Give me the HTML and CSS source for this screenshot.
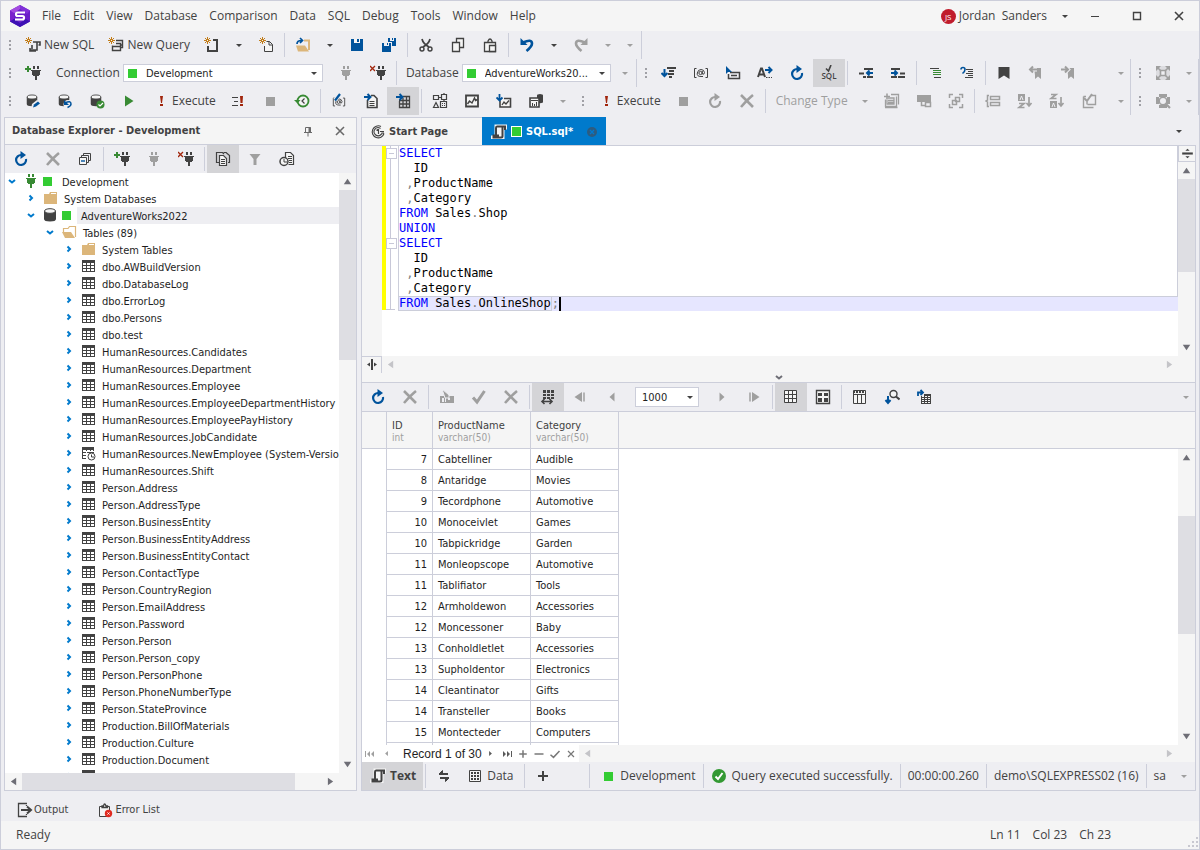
FILE: index.html
```
<!DOCTYPE html>
<html lang="en">
<head>
    <meta charset="UTF-8">
    <meta name="viewport" content="width=device-width, initial-scale=1.0">
    <title>SQL.sql - Database Explorer</title>
    <link rel="stylesheet" href="styles.css">
</head>
<body>
    <svg class="sprite" aria-hidden="true">
        <symbol id="i-caret" viewBox="0 0 16 16"><path d="M5 7h6l-3 3z" fill="currentColor"/></symbol>
        <symbol id="i-up" viewBox="0 0 16 16"><path d="M4.500 10.500h7L8 5.500z" fill="currentColor"/></symbol>
        <symbol id="i-down" viewBox="0 0 16 16"><path d="M4.500 5.500h7L8 10.500z" fill="currentColor"/></symbol>
        <symbol id="i-left" viewBox="0 0 16 16"><path d="M10.500 4.500v7L5.500 8z" fill="currentColor"/></symbol>
        <symbol id="i-right" viewBox="0 0 16 16"><path d="M5.500 4.500v7L10.500 8z" fill="currentColor"/></symbol>
        <symbol id="i-spark" viewBox="0 0 8 8"><path d="M3.500 0v7M0 3.500h7M1 1l5 5M6 1L1 6" stroke="#c27d1a" stroke-width="1" fill="none"/><path d="M3 3h1v1H3z" fill="#f5f5f5"/></symbol>
        <symbol id="i-script" viewBox="0 0 16 16"><path d="M4 2h9v3h-2v8H2v-2h2z" fill="#f5f5f5"/><path d="M14 5.500V2.500H5.500V12M11.500 2.500v10.500H2V11.500" fill="none" stroke="#f5f5f5" stroke-width="4"/><path d="M14 6V2.500H6Q5 2.500 5 4v7.500M11.500 2.500V12q0 1.500-1.500 1.500H2.500V11.500H8" fill="none" stroke="#424242" stroke-width="2"/></symbol>
        <symbol id="i-new-sql" viewBox="0 0 16 16"><path d="M8 5h7v3h-1.500M12 5v8H5.500M5 11v3h6M7 8v4" fill="none" stroke="#424242" stroke-width="1.600"/><use href="#i-spark" x="0" y="0" width="8" height="8"/></symbol>
        <symbol id="i-new-query" viewBox="0 0 16 16"><path d="M8 3.500h6.500v7H13M8 6.500h4.500v7h-8v-5M5 9.500h7M12 8h2" fill="none" stroke="#424242" stroke-width="1.400"/><use href="#i-spark" width="8" height="8"/></symbol>
        <symbol id="i-new-obj" viewBox="0 0 16 16"><path d="M9 3h4v11H4V9" fill="none" stroke="#424242" stroke-width="2"/><use href="#i-spark" width="8" height="8"/></symbol>
        <symbol id="i-new-doc" viewBox="0 0 16 16"><path d="M8.500 4.500h3l3 3v7h-8V9M11 4.500V8h3.500" fill="#f5f5f5" stroke="#424242"/><use href="#i-spark" x="1" width="8" height="8"/></symbol>
        <symbol id="i-open" viewBox="0 0 16 16"><path d="M9 3.500h5V13" fill="none" stroke="#dcb67a" stroke-width="2"/><path d="M1 8.500h9l4 6H3z" fill="#dcb67a"/><path d="M2 7q0-3.500 4.500-3.500M5 1l2.500 2.500L5 6" fill="none" stroke="#00539c" stroke-width="1.700"/></symbol>
        <symbol id="i-save" viewBox="0 0 16 16"><path d="M2 2h12v12H2z" fill="#00539c"/><path d="M5 2h6v4H5z" fill="#f5f5f5"/><path d="M8 2h2v3H8z" fill="#00539c"/></symbol>
        <symbol id="i-save-all" viewBox="0 0 16 16"><path d="M7 1h8v8H7z" fill="#00539c"/><path d="M9 1h4v3H9zM0 5h11v10H0z" fill="#eeeef2"/><path d="M11 1h1v2h-1zM1 6h9v9H1z" fill="#00539c"/><path d="M3 6h5v3H3z" fill="#eeeef2"/><path d="M6 6h1v2H6z" fill="#00539c"/></symbol>
        <symbol id="i-cut" viewBox="0 0 16 16"><path d="M4 2q1 4.500 7 8M12 2q-1 4.500-7 8" fill="none" stroke="#424242" stroke-width="1.700"/><circle cx="4" cy="12" r="2" fill="none" stroke="#424242" stroke-width="1.400"/><circle cx="12" cy="12" r="2" fill="none" stroke="#424242" stroke-width="1.400"/></symbol>
        <symbol id="i-copy" viewBox="0 0 16 16"><path d="M6.500 1.500h7v9h-7z" fill="#f5f5f5" stroke="#424242" stroke-width="1.300"/><path d="M2.500 5.500h7v9h-7z" fill="#f5f5f5" stroke="#424242" stroke-width="1.300"/></symbol>
        <symbol id="i-paste" viewBox="0 0 16 16"><path d="M2.500 5.500h11v9h-11zM6 5.500V4q2-4 4 0v1.500" fill="#f5f5f5" stroke="#424242" stroke-width="1.300"/><path d="M7.500 8.500h6v6h-6z" fill="#f5f5f5" stroke="#424242" stroke-width="1.300"/></symbol>
        <symbol id="i-undo" viewBox="0 0 16 16"><path d="M4 5.500q9-4 9 1 0 3-5.500 7.500" fill="none" stroke="currentColor" stroke-width="2.600"/><path d="M1.500 1v7h7L6.500 6 4 3.500z" fill="currentColor"/></symbol>
        <symbol id="i-redo" viewBox="0 0 16 16"><path d="M12 5.500q-9-4-9 1 0 3 5.500 7.500" fill="none" stroke="currentColor" stroke-width="2.600"/><path d="M14.500 1v7h-7l2-2L12 3.500z" fill="currentColor"/></symbol>
        <symbol id="i-plug" viewBox="0 0 16 16"><path d="M5 1h2v3H5zM9 1h2v3H9zM3 5h10v1h-1v4h-1v1H9v4H7v-4H5v-1H4V6H3z" fill="currentColor"/></symbol>
        <symbol id="i-plug-add" viewBox="0 0 16 16"><use href="#i-plug" x="3" width="16" height="16"/><path d="M0 4h6M3 1v6" stroke="#388a34" stroke-width="2"/></symbol>
        <symbol id="i-plug-x" viewBox="0 0 16 16"><use href="#i-plug" x="3" width="16" height="16"/><path d="M0 1l5 5M5 1L0 6" stroke="#a1260d" stroke-width="1.300"/></symbol>
        <symbol id="i-db" viewBox="0 0 16 16"><path d="M2 4v8q0 2.500 6 2.500t6-2.500V4z" fill="#424242"/><ellipse cx="8" cy="4" rx="5.500" ry="2.300" fill="#f5f5f5" stroke="#424242"/></symbol>
        <symbol id="i-db-edit" viewBox="0 0 16 16"><use href="#i-db" width="14" height="15"/><path d="M6 16l1-5 5-4 4 3-5 5z" fill="#eeeef2"/><path d="M8 14.500l1-3 4-3 2 2-4 3z" fill="#00539c"/></symbol>
        <symbol id="i-db-undo" viewBox="0 0 16 16"><use href="#i-db" width="14" height="15"/><circle cx="11" cy="11.500" r="4.500" fill="#eeeef2"/><path d="M8 10q6-3 6 1 0 2-3.500 3.500" fill="none" stroke="#00539c" stroke-width="1.500"/><path d="M7 7v5h5z" fill="#00539c"/></symbol>
        <symbol id="i-db-ok" viewBox="0 0 16 16"><use href="#i-db" width="14" height="15"/><circle cx="11.500" cy="11.500" r="4" fill="#388a34"/><path d="M9.500 11.500l1.500 1.500 3-3" fill="none" stroke="#fff" stroke-width="1.200"/></symbol>
        <symbol id="i-play" viewBox="0 0 16 16"><path d="M4 2.500v11L12.500 8z" fill="#388a34"/></symbol>
        <symbol id="i-bang" viewBox="0 0 16 16"><path d="M7 3h3l-1 7H8zM7 11h3v2H7z" fill="#a1260d"/></symbol>
        <symbol id="i-bang-list" viewBox="0 0 16 16"><path d="M2 4.500h6M4 8.500h4M2 12.500h6" stroke="#424242"/><path d="M10 3h3l-.5 7h-2zM10 11h3v2h-3z" fill="#a1260d"/></symbol>
        <symbol id="i-stop" viewBox="0 0 16 16"><path d="M4 4h9v9H4z" fill="#9f9f9f"/></symbol>
        <symbol id="i-history" viewBox="0 0 16 16"><circle cx="9" cy="8" r="5.500" fill="#f5f5f5" stroke="#388a34" stroke-width="1.800"/><path d="M10.500 5.500L8 8l2.500 2.500" fill="none" stroke="#424242" stroke-width="1.200"/><path d="M0 7h6.500L3.500 10.500z" fill="#388a34"/></symbol>
        <symbol id="i-at" viewBox="0 0 16 16"><path d="M3.500 3.500h-2v9h2M12.500 3.500h2v9h-2" fill="none" stroke="#424242"/><circle cx="7.500" cy="8" r="1.600" fill="none" stroke="#424242"/><path d="M9.300 6v3q2 1 2.200-1.500Q11 4.500 8 4.500T4.300 8 8 11.500h2" fill="none" stroke="#424242"/></symbol>
        <symbol id="i-at-edit" viewBox="0 0 16 16"><use href="#i-at" y="2" width="16" height="14"/><path d="M4 7L9 1" stroke="#eeeef2" stroke-width="4"/><path d="M4 7.500L9 1" stroke="#00539c" stroke-width="2.200"/></symbol>
        <symbol id="i-doc-go" viewBox="0 0 16 16"><path d="M8 2.500h3l3 3v9H4.500V7" fill="#f5f5f5" stroke="#424242" stroke-width="1.600"/><path d="M6.500 8.500h5M6.500 10.500h5M6.500 12.500h5" stroke="#424242"/><path d="M1 4h6M4.500 1l3 3-3 3" fill="none" stroke="#00539c" stroke-width="2"/></symbol>
        <symbol id="i-grid-go" viewBox="0 0 16 16"><path d="M8 3.500h6.500v11h-10V8M4 7.500h10M4 11h10M8 5v10M11.500 4v11" fill="none" stroke="#424242" stroke-width="1.300"/><path d="M1 4h6M4.500 1l3 3-3 3" fill="none" stroke="#00539c" stroke-width="2"/></symbol>
        <symbol id="i-diagram" viewBox="0 0 16 16"><path d="M1.500 2.500h5v4h-5zM7 4.500h3M1.500 14.500h5L4 9.500z" fill="none" stroke="#424242" stroke-width="1.200"/><path d="M9.500 1.500h5v5h-5zM8.500 8.500h6v6h-6zM12 2V0M12 7v2" fill="none" stroke="#424242" stroke-width="1.200"/><path d="M10 10.500h3M10 12.500h3" stroke="#424242" stroke-dasharray="1 1"/></symbol>
        <symbol id="i-chart" viewBox="0 0 16 16"><path d="M2 2.500h12v11H2z" fill="#f5f5f5" stroke="#424242" stroke-width="1.800"/><path d="M3.500 11l2-3L8 10l2.500-5 1 2.500 2-1" fill="none" stroke="#424242" stroke-width="1.400"/></symbol>
        <symbol id="i-chart-in" viewBox="0 0 16 16"><path d="M4 7.500V14h10.500V5.500H8" fill="#f5f5f5" stroke="#424242" stroke-width="1.600"/><path d="M6 12l2-3 2 2 3-3.500" fill="none" stroke="#424242" stroke-width="1.300"/><path d="M3.500 1v6M.5 4.500l3 3 3-3" fill="none" stroke="#00539c" stroke-width="1.800"/></symbol>
        <symbol id="i-chart-db" viewBox="0 0 16 16"><path d="M9 2.500v7q3 1.500 6 0v-7z" fill="#424242"/><ellipse cx="12" cy="2.500" rx="3" ry="1.500" fill="#424242"/><path d="M2 5h9v9H2z" fill="#f5f5f5" stroke="#424242" stroke-width="1.600"/><path d="M3 7.500h7M4.500 13v-3M6.500 13v-2M8.500 13V9" stroke="#424242"/></symbol>
        <symbol id="i-format" viewBox="0 0 16 16"><path d="M6 3h9M8 6h5M7 9h6M8 12h3" stroke="#424242" stroke-width="2"/><path d="M3.500 4v7M.5 8l3 3 3-3" fill="none" stroke="#00539c" stroke-width="2"/></symbol>
        <symbol id="i-select" viewBox="0 0 16 16"><path d="M5 7.500h9.500v6H3.500V9M6 10.500h6" fill="none" stroke="#424242" stroke-width="1.500"/><path d="M1 1v8l2-2h4z" fill="#00539c"/></symbol>
        <symbol id="i-rename" viewBox="0 0 16 16"><path d="M1 12L4 3.500h1L8 12M2.500 9.500h4" fill="none" stroke="#424242" stroke-width="2"/><path d="M9 12.500h1.500M11.500 12.500H13M14 12.500h1" stroke="#424242"/><path d="M8 5h6M11.500 2l3 3-3 3" fill="none" stroke="#00539c" stroke-width="2"/></symbol>
        <symbol id="i-refresh" viewBox="0 0 16 16"><path d="M13 8A5 5 0 1 1 8.500 4" fill="none" stroke="currentColor" stroke-width="2.200"/><path d="M7.500 0l5.500 4-5.500 4z" fill="currentColor"/></symbol>
        <symbol id="i-sql-check" viewBox="0 0 16 16"><path d="M5 3.500L7.500 6 10 0" fill="none" stroke="#424242" stroke-width="1.600"/><text x="8" y="14" text-anchor="middle" class="svg-text">SQL</text></symbol>
        <symbol id="i-outdent" viewBox="0 0 16 16"><path d="M6 4h9M1 8.500h5M9 12h6M5 12h3" stroke="#424242" stroke-width="2"/><path d="M9 8h6M11.500 5.500L9 8l2.500 2.500" fill="none" stroke="#00539c" stroke-width="2"/></symbol>
        <symbol id="i-indent" viewBox="0 0 16 16"><path d="M1 4h9M10 8.500h5M1 12h6M8 12h7" stroke="#424242" stroke-width="2"/><path d="M1 8h6M4.500 5.500L7 8l-2.500 2.500" fill="none" stroke="#00539c" stroke-width="2"/></symbol>
        <symbol id="i-comment" viewBox="0 0 16 16"><path d="M3 3.500h9M7 12.500h7" stroke="#424242"/><path d="M6 5.500h8M6 7.500h8M6 9.500h8" stroke="#388a34"/></symbol>
        <symbol id="i-uncomment" viewBox="0 0 16 16"><path d="M7 4.500h7M9 6.500h5M7 8.500h7M9 10.500h5M6 12.500h8" stroke="#424242"/><path d="M2 4.500q0-2 2-2t2 2-2.500 4" fill="none" stroke="#00539c" stroke-width="1.600"/></symbol>
        <symbol id="i-bookmark" viewBox="0 0 16 16"><path d="M2.500 2h11v12L8 10.500 2.500 14z" fill="currentColor"/></symbol>
        <symbol id="i-bm-prev" viewBox="0 0 16 16"><path d="M6 3h7v11l-3-2.500L7 14v-4z" fill="currentColor"/><path d="M9 4.500H2M5 1.500l-3 3 3 3" fill="none" stroke="#eeeef2" stroke-width="4"/><path d="M9 4.500H2M5 1.500l-3 3 3 3" fill="none" stroke="currentColor" stroke-width="2"/></symbol>
        <symbol id="i-bm-next" viewBox="0 0 16 16"><path d="M7 3h7v11l-3-2.500L8 14v-4z" fill="currentColor"/><path d="M1 4.500h7M5 1.500l3 3-3 3" fill="none" stroke="#eeeef2" stroke-width="4"/><path d="M1 4.500h7M5 1.500l3 3-3 3" fill="none" stroke="currentColor" stroke-width="2"/></symbol>
        <symbol id="i-fit" viewBox="0 0 16 16"><path d="M1 1h14v14H1z" fill="#dcdce0"/><path d="M5.500 5.500h5v5h-5z" fill="#eeeef2" stroke="currentColor" stroke-width="1.600"/><path d="M1 1h5L1 6zM15 1h-5l5 5zM1 15h5l-5-5zM15 15h-5l5-5z" fill="currentColor"/><path d="M3 3l3 3M13 3l-3 3M3 13l3-3M13 13l-3-3" stroke="currentColor" stroke-width="1.500"/></symbol>
        <symbol id="i-fit-zoom" viewBox="0 0 16 16"><path d="M4 2.500h8M2.500 4v7M13.500 4v7M4 13.500h8" stroke="currentColor" stroke-width="3"/><circle cx="8" cy="8" r="3.800" fill="#eeeef2" stroke="currentColor" stroke-width="1.600"/><path d="M10.500 10.500L15 15" stroke="currentColor" stroke-width="2.200"/></symbol>
        <symbol id="i-layers" viewBox="0 0 16 16"><path d="M7 1.500h7.500v10M12.500 3.500v10h-11v-7" fill="none" stroke="currentColor" stroke-width="1.300"/><path d="M1 14.500h12.500M4 5h6v6H3V7M4 7.500h6M4 9.500h6" fill="none" stroke="currentColor" stroke-width="1.300"/><path d="M0 3.500h6M3 .5v6" stroke="currentColor" stroke-width="1.600"/></symbol>
        <symbol id="i-container" viewBox="0 0 16 16"><path d="M1 2h14v7H1z" fill="currentColor"/><path d="M5.500 9v3.500H9M9.500 9.500h5v4h-5z" fill="#eeeef2" stroke="currentColor" stroke-width="1.500"/></symbol>
        <symbol id="i-focus" viewBox="0 0 16 16"><path d="M1.500 5V1.500H5M11 1.500h3.500V5M14.500 11v3.500H11M5 14.500H1.500V11M7.500 4.500h4v4h-4zM4.500 7.500h4v4h-4z" fill="none" stroke="currentColor" stroke-width="1.500"/></symbol>
        <symbol id="i-brace" viewBox="0 0 16 16"><path d="M4 2.500H2.500V7L1 8l1.500 1v4.500H4M5.500 3.500h9v3h-9zM5.500 9.500h9v3h-9z" fill="none" stroke="currentColor" stroke-width="1.500"/></symbol>
        <symbol id="i-az" viewBox="0 0 16 16"><path d="M1 1h7v7H1z" fill="currentColor"/><path d="M3 7l1.500-4L6 7" fill="none" stroke="#eeeef2"/><path d="M2 10.500h5l-5 4h5.500M12 4v9M9.500 10l2.500 3 2.500-3" fill="none" stroke="currentColor" stroke-width="1.700"/></symbol>
        <symbol id="i-za" viewBox="0 0 16 16"><path d="M1 8h7v7H1z" fill="currentColor"/><path d="M3 14l1.500-4L6 14" fill="none" stroke="#eeeef2"/><path d="M2 1.500h5l-5 4h5.500M12 4v9M9.500 10l2.500 3 2.500-3" fill="none" stroke="currentColor" stroke-width="1.700"/></symbol>
        <symbol id="i-task" viewBox="0 0 16 16"><path d="M10 2.500h4.500v9h-8M2.500 3.500v11h10M6 11.500V9M2.500 3.500H5" fill="none" stroke="currentColor" stroke-width="1.400"/><path d="M3 5l3 3 5-7" fill="none" stroke="currentColor" stroke-width="2"/></symbol>
        <symbol id="i-x" viewBox="0 0 16 16"><path d="M2 2l12 12M14 2q-5 4-12 12" fill="none" stroke="currentColor" stroke-width="2.600"/></symbol>
        <symbol id="i-close" viewBox="0 0 16 16"><path d="M4 4l8 8M12 4l-8 8" stroke="currentColor" stroke-width="1.600"/></symbol>
        <symbol id="i-min" viewBox="0 0 16 16"><path d="M4 8.500h8" stroke="currentColor"/></symbol>
        <symbol id="i-max" viewBox="0 0 16 16"><path d="M4.500 4.500h7v7h-7z" fill="none" stroke="currentColor" stroke-width="1.400"/></symbol>
        <symbol id="i-pin" viewBox="0 0 16 16"><path d="M5.500 9V4.500h5V9M4 9.500h8M8 10v3.500" fill="none" stroke="currentColor"/><path d="M8.500 4.500H11V9H8.500z" fill="currentColor"/></symbol>
        <symbol id="i-collapse" viewBox="0 0 16 16"><path d="M6.500 4V2.500h7v7H12M4.500 6V4.500h7v7H10" fill="none" stroke="#424242"/><path d="M2.500 6.500h7v7h-7z" fill="#f5f5f5" stroke="#424242"/><path d="M4 10h4" stroke="#00539c" stroke-width="1.400"/></symbol>
        <symbol id="i-docs" viewBox="0 0 16 16"><path d="M4 11.500H1.500v-10h6L9 3M11 1.500l3.500 3v7H13" fill="none" stroke="#424242" stroke-width="1.200"/><path d="M4.500 4.500h4l3 3v7h-7zM8.500 1.500h3" fill="#f5f5f5" stroke="#424242" stroke-width="1.200"/><path d="M6 8.500h4M6 10.500h4M6 12.500h4" stroke="#424242"/></symbol>
        <symbol id="i-filter" viewBox="0 0 16 16"><path d="M2.500 3h11L9.500 8v6h-3V8z" fill="currentColor"/></symbol>
        <symbol id="i-doc-clock" viewBox="0 0 16 16"><path d="M6.500 7V1.500h5l3 3v9h-5" fill="#f5f5f5" stroke="#424242" stroke-width="1.200"/><path d="M9 5.500h4M9 7.500h4M10 9.500h3M10 11.500h3" stroke="#424242"/><circle cx="5" cy="10.500" r="4" fill="#f5f5f5" stroke="#424242" stroke-width="1.500"/><path d="M5 8v3h3" fill="none" stroke="#424242"/></symbol>
        <symbol id="i-folder" viewBox="0 0 16 16"><path d="M2 4h5l1-2h7v12H2z" fill="#dcb67a"/><path d="M9 3.500h5" stroke="#fff"/></symbol>
        <symbol id="i-folder-open" viewBox="0 0 16 16"><path d="M2.500 8V4.500H7l1.500-2h6v10.500" fill="none" stroke="#dcb67a" stroke-width="1.200"/><path d="M1 8h9l4 6H4z" fill="#dcb67a"/></symbol>
        <symbol id="i-table" viewBox="0 0 16 16"><path d="M2 2h13v12H2z" fill="#424242"/><path d="M3 5h3v2H3zM7 5h3v2H7zM11 5h3v2h-3zM3 8h3v2H3zM7 8h3v2H7zM11 8h3v2h-3zM3 11h3v2H3zM7 11h3v2H7zM11 11h3v2h-3z" fill="#fff"/></symbol>
        <symbol id="i-table-sys" viewBox="0 0 16 16"><path d="M2 2h12v4H6v8H2z" fill="#424242"/><path d="M3 5h3v2H3zM7 5h3v2H7zM11 5h2v2h-2zM3 8h3v2H3zM3 11h3v2H3z" fill="#fff"/><circle cx="11.500" cy="11.500" r="3.500" fill="#fff" stroke="#424242"/><path d="M11.500 9.500v2.500H14M7 7.500h7" fill="none" stroke="#424242"/></symbol>
        <symbol id="i-chev-r" viewBox="0 0 16 16"><path d="M5.500 5.500L8 8l-2.500 2.500" fill="none" stroke="#007acc" stroke-width="2"/></symbol>
        <symbol id="i-chev-d" viewBox="0 0 16 16"><path d="M4 7l3 2.500L10 7" fill="none" stroke="currentColor" stroke-width="2"/></symbol>
        <symbol id="i-start" viewBox="0 0 16 16"><path d="M11 2.500A6 6 0 1 0 14 9.500M10.500 4.500a4 4 0 1 0 .5 6q1-.5 1-1.500h2" fill="none" stroke="#424242" stroke-width="1.100"/><path d="M8.500 5v5M6.500 6.500l2-1.500M10 7.500h4" fill="none" stroke="#424242" stroke-width="1.200"/></symbol>
        <symbol id="i-tab-close" viewBox="0 0 16 16"><circle cx="8" cy="8" r="5" fill="#2d5c80"/><path d="M6 6l4 4M10 6l-4 4" stroke="#0079d0" stroke-width="1.400"/></symbol>
        <symbol id="i-split-h" viewBox="0 0 16 16"><path d="M8 2v11" stroke="#424242" stroke-width="2"/><path d="M6 5.500v4l-3-2zM10 5.500v4l3-2z" fill="#424242"/></symbol>
        <symbol id="i-split-v" viewBox="0 0 16 16"><path d="M3 8h10" stroke="#424242" stroke-width="2"/><path d="M6 5.500h4L8 3.500zM6 10.500h4L8 12.500z" fill="#424242"/></symbol>
        <symbol id="i-edit-cell" viewBox="0 0 16 16"><path d="M1 7h14v7H1z" fill="currentColor"/><path d="M3 9h2v4H3zM6 9h1v4H6zM9 9h2v2H9z" fill="#eeeef2"/><path d="M3 0l7 6v3H6z" fill="currentColor" stroke="#eeeef2"/></symbol>
        <symbol id="i-check" viewBox="0 0 16 16"><path d="M2 8.500l4 4.500L13.500 2" fill="none" stroke="currentColor" stroke-width="3"/></symbol>
        <symbol id="i-check-thin" viewBox="0 0 16 16"><path d="M2 9l4 3.500L14 4" fill="none" stroke="currentColor" stroke-width="2"/></symbol>
        <symbol id="i-grid-w" viewBox="0 0 16 16"><path d="M3 1h3v3H3zM7 1h3v3H7zM11 1h3v3h-3zM3 5h3v2H3zM7 5h3v2H7zM11 5h3v2h-3zM3 8h3v2H3zM7 8h3v2H7zM11 8h3v2h-3z" fill="#424242"/><path d="M2 12.500h10M4.500 10L2 12.500 4.500 15M9.500 10l2.500 2.500L9.500 15" fill="none" stroke="#424242" stroke-width="1.600"/></symbol>
        <symbol id="i-first" viewBox="0 0 16 16"><path d="M10 3v10L2.500 8z" fill="currentColor"/><path d="M12 3.500v9" stroke="currentColor" stroke-width="1.500"/></symbol>
        <symbol id="i-last" viewBox="0 0 16 16"><path d="M6 3v10l7.500-5z" fill="currentColor"/><path d="M4 3.500v9" stroke="currentColor" stroke-width="1.500"/></symbol>
        <symbol id="i-prev" viewBox="0 0 16 16"><path d="M10.500 3.500v9L5.500 8z" fill="currentColor"/></symbol>
        <symbol id="i-next" viewBox="0 0 16 16"><path d="M5.500 3.500v9l5-4.500z" fill="currentColor"/></symbol>
        <symbol id="i-grid" viewBox="0 0 16 16"><path d="M1.500 1.500h12v12h-12z" fill="#f5f5f5" stroke="#424242"/><path d="M1 5.500h13M1 9.500h13M5.500 1v13M9.500 1v13" stroke="#424242"/></symbol>
        <symbol id="i-data" viewBox="0 0 16 16"><path d="M2.500 2.500h11v11h-11z" fill="#f5f5f5" stroke="#424242"/><path d="M4 4h2v2H4zM7 4h2v2H7zM10 4h2v2h-2zM4 7h2v2H4zM7 7h2v2H7zM10 7h2v2h-2zM4 10h2v2H4zM7 10h2v2H7zM10 10h2v2h-2z" fill="#424242"/></symbol>
        <symbol id="i-cards" viewBox="0 0 16 16"><path d="M1.500 1.500h13v13h-13z" fill="#f5f5f5" stroke="#424242" stroke-width="1.400"/><path d="M3 4h4v3H3zM9 4h4v3H9zM3 9h4v4H3zM9 9h4v4H9z" fill="#424242"/></symbol>
        <symbol id="i-columns" viewBox="0 0 16 16"><path d="M1.500 1.500h12v13h-12zM1 5.500h13M5.500 5v10M9.500 5v10" fill="#f5f5f5" stroke="#424242"/><path d="M1 3h13" stroke="#424242" stroke-width="2" stroke-dasharray="2 1"/></symbol>
        <symbol id="i-find" viewBox="0 0 16 16"><circle cx="9.500" cy="5" r="3.500" fill="#f5f5f5" stroke="#424242" stroke-width="1.400"/><path d="M12 7.500l3.500 3" stroke="#424242" stroke-width="2"/><path d="M4 7v7M1.500 11L4 14l2.500-3" fill="none" stroke="#00539c" stroke-width="2"/></symbol>
        <symbol id="i-grid-send" viewBox="0 0 16 16"><path d="M5 5h10v10H5z" fill="#424242"/><path d="M6 7h2v1H6zM9 7h2v1H9zM12 7h2v1h-2zM6 9h2v1H6zM9 9h2v1H9zM12 9h2v1h-2zM6 11h2v1H6zM9 11h2v1H9zM12 11h2v1h-2zM6 13h2v1H6zM9 13h2v1H9zM12 13h2v1h-2z" fill="#f5f5f5"/><path d="M3 2h5v5H3z" fill="#eeeef2"/><path d="M2 7V3.500h5M4.500 1L7 3.500 4.500 6" fill="none" stroke="#00539c" stroke-width="1.800"/></symbol>
        <symbol id="i-swap" viewBox="0 0 16 16"><path d="M3 6h9M4 10h9" stroke="#424242" stroke-width="2"/><path d="M6.500 2.500V6H3zM9.500 13.500V10H13z" fill="#424242" stroke="#424242"/></symbol>
        <symbol id="i-plus" viewBox="0 0 16 16"><path d="M3 8h10M8 3v10" stroke="currentColor" stroke-width="2"/></symbol>
        <symbol id="i-minus" viewBox="0 0 16 16"><path d="M2 8h12" stroke="currentColor" stroke-width="2"/></symbol>
        <symbol id="i-ok" viewBox="0 0 16 16"><circle cx="8" cy="8" r="7" fill="#339933"/><path d="M4.500 8.500L7 11l4.500-6" fill="none" stroke="#fff" stroke-width="2"/></symbol>
        <symbol id="i-rec-first" viewBox="0 0 16 16"><path d="M3.500 5v6" stroke="currentColor"/><path d="M8 5v6L5 8zM12 5v6L9 8z" fill="currentColor"/></symbol>
        <symbol id="i-rec-last" viewBox="0 0 16 16"><path d="M12.500 5v6" stroke="currentColor"/><path d="M4 5v6l3-3zM8 5v6l3-3z" fill="currentColor"/></symbol>
        <symbol id="i-output" viewBox="0 0 16 16"><path d="M10 1.500H1.500v13H10M9.500 3v1M9.500 12v1" fill="none" stroke="#424242" stroke-width="1.300"/><path d="M4 8h9M10 4.500l4 3.500-4 3.500" fill="none" stroke="#424242" stroke-width="2"/></symbol>
        <symbol id="i-errors" viewBox="0 0 16 16"><path d="M1.500 4.500h10v10h-10z" fill="#f5f5f5" stroke="#424242"/><path d="M4 5.500V4h1.500q1-4 2.500 0H9.500v1.500z" fill="#f5f5f5" stroke="#424242" stroke-width="1.300"/><circle cx="10.500" cy="11.500" r="3.700" fill="#e02a20"/><path d="M9.500 10.500l2 2M11.500 10.500l-2 2" stroke="#fff"/></symbol>
        <symbol id="i-grip" viewBox="0 0 16 16"><path d="M13 8h2v2h-2zM13 12h2v2h-2zM9 12h2v2H9zM13 4h2v2h-2zM9 8h2v2H9zM5 12h2v2H5z" fill="#c8c8d0"/></symbol>
    </svg>

    <div class="window">
        <header class="titlebar">
            <svg class="logo" viewBox="0 0 20 22">
                <path d="M10 0l10 5.500v11L10 22 0 16.500v-11z" fill="#6a1fc8"/>
                <path d="M10 0L0 5.500 3 9l7-5z" fill="#a34be0"/>
                <path d="M10 0l10 5.500L17 9l-7-5z" fill="#8030d8"/>
                <path d="M0 5.500v11L4 14V8z" fill="#7a22cc"/>
                <path d="M0 16.500L10 22l10-5.500L16 14l-6 4-6-4z" fill="#3d10b4"/>
                <path d="M15 7.500H7.500Q6 7.500 6 9.200T7.500 11h5q1.500 0 1.500 1.700t-1.500 1.800H5" fill="none" stroke="#fff" stroke-width="2.200"/>
            </svg>
            <nav class="menu">
                <a href="#">File</a>
                <a href="#">Edit</a>
                <a href="#">View</a>
                <a href="#">Database</a>
                <a href="#">Comparison</a>
                <a href="#">Data</a>
                <a href="#">SQL</a>
                <a href="#">Debug</a>
                <a href="#">Tools</a>
                <a href="#">Window</a>
                <a href="#">Help</a>
            </nav>
            <button class="user"><span class="avatar">JS</span><span>Jordan&nbsp; Sanders</span></button>
            <button class="arrow" aria-label="Account menu"><svg class="icon"><use href="#i-caret"/></svg></button>
            <div class="window-buttons">
                <button aria-label="Minimize"><svg class="icon"><use href="#i-min"/></svg></button>
                <button aria-label="Maximize"><svg class="icon"><use href="#i-max"/></svg></button>
                <button aria-label="Close"><svg class="icon"><use href="#i-close"/></svg></button>
            </div>
        </header>

        <div class="toolbar">
            <div class="group">
                <span class="grip"></span>
                <button class="text-tool"><svg class="icon"><use href="#i-new-sql"/></svg>New SQL</button>
                <button class="text-tool"><svg class="icon"><use href="#i-new-query"/></svg>New Query</button>
                <button class="tool" aria-label="New object"><svg class="icon"><use href="#i-new-obj"/></svg></button>
                <button class="arrow" aria-label="More"><svg class="icon"><use href="#i-caret"/></svg></button>
                <button class="tool" aria-label="New document"><svg class="icon"><use href="#i-new-doc"/></svg></button>
                <span class="sep"></span>
                <button class="tool" aria-label="Open"><svg class="icon"><use href="#i-open"/></svg></button>
                <button class="arrow" aria-label="More"><svg class="icon"><use href="#i-caret"/></svg></button>
                <button class="tool" aria-label="Save"><svg class="icon"><use href="#i-save"/></svg></button>
                <button class="tool" aria-label="Save all"><svg class="icon"><use href="#i-save-all"/></svg></button>
                <span class="sep"></span>
                <button class="tool" aria-label="Cut"><svg class="icon"><use href="#i-cut"/></svg></button>
                <button class="tool" aria-label="Copy"><svg class="icon"><use href="#i-copy"/></svg></button>
                <button class="tool" aria-label="Paste"><svg class="icon"><use href="#i-paste"/></svg></button>
                <span class="sep"></span>
                <button class="tool blue" aria-label="Undo"><svg class="icon"><use href="#i-undo"/></svg></button>
                <button class="arrow" aria-label="More"><svg class="icon"><use href="#i-caret"/></svg></button>
                <button class="tool" aria-label="Redo" disabled><svg class="icon"><use href="#i-redo"/></svg></button>
                <button class="arrow" aria-label="More" disabled><svg class="icon"><use href="#i-caret"/></svg></button>
                <button class="arrow dim" aria-label="Toolbar options"><svg class="icon"><use href="#i-caret"/></svg></button>
            </div>
        </div>

        <div class="toolbar">
            <div class="group">
                <span class="grip"></span>
                <button class="tool" aria-label="New connection"><svg class="icon"><use href="#i-plug-add"/></svg></button>
                <label class="tool-label" for="connection">Connection</label>
                <div class="combo combo-wide">
                    <span class="swatch"></span>
                    <select id="connection"><option>Development</option></select>
                    <svg class="icon"><use href="#i-caret"/></svg>
                </div>
                <button class="tool tool-after" aria-label="Connect" disabled><svg class="icon"><use href="#i-plug"/></svg></button>
                <button class="tool" aria-label="Disconnect"><svg class="icon"><use href="#i-plug-x"/></svg></button>
                <span class="sep"></span>
                <label class="tool-label" for="database">Database</label>
                <div class="combo combo-db">
                    <span class="swatch"></span>
                    <select id="database"><option>AdventureWorks20...</option></select>
                    <svg class="icon"><use href="#i-caret"/></svg>
                </div>
                <button class="arrow dim" aria-label="Toolbar options"><svg class="icon"><use href="#i-caret"/></svg></button>
            </div>
            <div class="group grow">
                <span class="grip"></span>
                <button class="tool" aria-label="Format"><svg class="icon"><use href="#i-format"/></svg></button>
                <button class="tool" aria-label="Parameters"><svg class="icon"><use href="#i-at"/></svg></button>
                <button class="tool" aria-label="Select"><svg class="icon"><use href="#i-select"/></svg></button>
                <button class="tool" aria-label="Rename"><svg class="icon"><use href="#i-rename"/></svg></button>
                <button class="tool blue" aria-label="Refresh"><svg class="icon"><use href="#i-refresh"/></svg></button>
                <button class="tool active" aria-label="Check syntax"><svg class="icon"><use href="#i-sql-check"/></svg></button>
                <span class="sep"></span>
                <button class="tool" aria-label="Decrease indent"><svg class="icon"><use href="#i-outdent"/></svg></button>
                <button class="tool" aria-label="Increase indent"><svg class="icon"><use href="#i-indent"/></svg></button>
                <span class="sep"></span>
                <button class="tool" aria-label="Comment"><svg class="icon"><use href="#i-comment"/></svg></button>
                <button class="tool" aria-label="Uncomment"><svg class="icon"><use href="#i-uncomment"/></svg></button>
                <span class="sep"></span>
                <button class="tool" aria-label="Bookmark"><svg class="icon"><use href="#i-bookmark"/></svg></button>
                <button class="tool" aria-label="Previous bookmark" disabled><svg class="icon"><use href="#i-bm-prev"/></svg></button>
                <button class="tool" aria-label="Next bookmark" disabled><svg class="icon"><use href="#i-bm-next"/></svg></button>
                <button class="arrow dim end" aria-label="Toolbar options"><svg class="icon"><use href="#i-caret"/></svg></button>
            </div>
            <div class="group group-last">
                <span class="grip"></span>
                <button class="tool" aria-label="Fit" disabled><svg class="icon"><use href="#i-fit"/></svg></button>
                <button class="arrow dim" aria-label="Toolbar options"><svg class="icon"><use href="#i-caret"/></svg></button>
            </div>
        </div>

        <div class="toolbar">
            <div class="group no-edge">
                <span class="grip"></span>
                <button class="tool" aria-label="Edit database"><svg class="icon"><use href="#i-db-edit"/></svg></button>
                <button class="tool" aria-label="Roll back"><svg class="icon"><use href="#i-db-undo"/></svg></button>
                <button class="tool" aria-label="Commit"><svg class="icon"><use href="#i-db-ok"/></svg></button>
                <button class="tool" aria-label="Run"><svg class="icon"><use href="#i-play"/></svg></button>
                <button class="text-tool"><svg class="icon"><use href="#i-bang"/></svg>Execute</button>
                <button class="tool" aria-label="Execute current"><svg class="icon"><use href="#i-bang-list"/></svg></button>
                <button class="tool" aria-label="Stop" disabled><svg class="icon"><use href="#i-stop"/></svg></button>
                <button class="tool" aria-label="History"><svg class="icon"><use href="#i-history"/></svg></button>
                <span class="sep"></span>
                <button class="tool" aria-label="Edit parameters"><svg class="icon"><use href="#i-at-edit"/></svg></button>
                <button class="tool" aria-label="Results to text"><svg class="icon"><use href="#i-doc-go"/></svg></button>
                <button class="tool active" aria-label="Results to grid"><svg class="icon"><use href="#i-grid-go"/></svg></button>
                <span class="sep"></span>
                <button class="tool" aria-label="Diagram"><svg class="icon"><use href="#i-diagram"/></svg></button>
                <button class="tool" aria-label="Profile"><svg class="icon"><use href="#i-chart"/></svg></button>
                <button class="tool" aria-label="Import profile"><svg class="icon"><use href="#i-chart-in"/></svg></button>
                <button class="tool" aria-label="Report"><svg class="icon"><use href="#i-chart-db"/></svg></button>
                <button class="arrow dim" aria-label="Toolbar options"><svg class="icon"><use href="#i-caret"/></svg></button>
            </div>
            <div class="group grow">
                <span class="grip"></span>
                <button class="text-tool"><svg class="icon"><use href="#i-bang"/></svg>Execute</button>
                <button class="tool" aria-label="Stop" disabled><svg class="icon"><use href="#i-stop"/></svg></button>
                <button class="tool" aria-label="Refresh" disabled><svg class="icon"><use href="#i-refresh"/></svg></button>
                <button class="tool" aria-label="Delete" disabled><svg class="icon"><use href="#i-x"/></svg></button>
                <span class="sep"></span>
                <button class="text-tool" disabled>Change Type</button>
                <button class="arrow dim" aria-label="More" disabled><svg class="icon"><use href="#i-caret"/></svg></button>
                <button class="tool" aria-label="Add layer" disabled><svg class="icon"><use href="#i-layers"/></svg></button>
                <button class="tool" aria-label="Container" disabled><svg class="icon"><use href="#i-container"/></svg></button>
                <button class="tool" aria-label="Focus" disabled><svg class="icon"><use href="#i-focus"/></svg></button>
                <span class="sep"></span>
                <button class="tool" aria-label="Group" disabled><svg class="icon"><use href="#i-brace"/></svg></button>
                <button class="tool" aria-label="Sort ascending" disabled><svg class="icon"><use href="#i-az"/></svg></button>
                <button class="tool" aria-label="Sort descending" disabled><svg class="icon"><use href="#i-za"/></svg></button>
                <button class="tool" aria-label="Criteria" disabled><svg class="icon"><use href="#i-task"/></svg></button>
                <button class="arrow dim end" aria-label="Toolbar options"><svg class="icon"><use href="#i-caret"/></svg></button>
            </div>
            <div class="group group-last">
                <span class="grip"></span>
                <button class="tool" aria-label="Zoom" disabled><svg class="icon"><use href="#i-fit-zoom"/></svg></button>
                <button class="arrow dim" aria-label="Toolbar options"><svg class="icon"><use href="#i-caret"/></svg></button>
            </div>
        </div>

        <main class="workspace">
            <aside class="explorer">
                <div class="panel-title">
                    <h2>Database Explorer - Development</h2>
                    <button class="tool" aria-label="Pin"><svg class="icon"><use href="#i-pin"/></svg></button>
                    <button class="tool" aria-label="Close"><svg class="icon"><use href="#i-close"/></svg></button>
                </div>
                <div class="panel-tools">
                    <button class="tool blue" aria-label="Refresh"><svg class="icon"><use href="#i-refresh"/></svg></button>
                    <button class="tool" aria-label="Delete" disabled><svg class="icon"><use href="#i-x"/></svg></button>
                    <button class="tool" aria-label="Collapse all"><svg class="icon"><use href="#i-collapse"/></svg></button>
                    <span class="sep"></span>
                    <button class="tool" aria-label="New connection"><svg class="icon"><use href="#i-plug-add"/></svg></button>
                    <button class="tool" aria-label="Connect" disabled><svg class="icon"><use href="#i-plug"/></svg></button>
                    <button class="tool" aria-label="Disconnect"><svg class="icon"><use href="#i-plug-x"/></svg></button>
                    <span class="sep"></span>
                    <button class="tool active" aria-label="Show details"><svg class="icon"><use href="#i-docs"/></svg></button>
                    <button class="tool" aria-label="Filter" disabled><svg class="icon"><use href="#i-filter"/></svg></button>
                    <button class="tool" aria-label="Recent"><svg class="icon"><use href="#i-doc-clock"/></svg></button>
                </div>
                <div class="tree-area">
                    <ul class="tree" id="tree"></ul>
                    <div class="scroll-v">
                        <svg class="icon"><use href="#i-up"/></svg>
                        <div class="track"><div class="thumb tree-thumb"></div></div>
                        <svg class="icon"><use href="#i-down"/></svg>
                    </div>
                </div>
                <div class="scroll-h tree-scroll-h">
                    <svg class="icon"><use href="#i-left"/></svg>
                    <div class="track"><div class="thumb"></div></div>
                    <svg class="icon"><use href="#i-right"/></svg>
                </div>
            </aside>

            <section class="document">
                <div class="tabs">
                    <button class="tab"><svg class="icon"><use href="#i-start"/></svg>Start Page</button>
                    <button class="tab current"><svg class="icon"><use href="#i-script"/></svg><span class="swatch"></span>SQL.sql*<svg class="icon tab-x"><use href="#i-tab-close"/></svg></button>
                    <button class="arrow end" aria-label="Open documents"><svg class="icon"><use href="#i-caret"/></svg></button>
                </div>

                <div class="editor">
                    <div class="gutter"></div>
                    <div class="changed"></div>
                    <div class="folds">
                        <div class="fold fold-first"></div>
                        <div class="fold fold-second"></div>
                    </div>
                    <div class="code" contenteditable="true" role="textbox" aria-label="SQL" spellcheck="false">
                        <div class="statement">
                            <div class="line"><b>SELECT</b></div>
                            <div class="line indent-2">ID</div>
                            <div class="line indent-1"><i>,</i>ProductName</div>
                            <div class="line indent-1"><i>,</i>Category</div>
                            <div class="line"><b>FROM</b> Sales<i>.</i>Shop</div>
                            <div class="line"><b>UNION</b></div>
                            <div class="line"><b>SELECT</b></div>
                            <div class="line indent-2">ID</div>
                            <div class="line indent-1"><i>,</i>ProductName</div>
                            <div class="line indent-1"><i>,</i>Category</div>
                        </div>
                        <div class="line-current"><span class="frame"><b>FROM</b> Sales<i>.</i>OnlineShop</span><span class="caret"><i>;</i></span></div>
                    </div>
                    <div class="scroll-v">
                        <button class="split-v" aria-label="Split"><svg class="icon"><use href="#i-split-v"/></svg></button>
                        <svg class="icon"><use href="#i-up"/></svg>
                        <div class="track"><div class="thumb editor-thumb"></div></div>
                        <svg class="icon"><use href="#i-down"/></svg>
                    </div>
                </div>
                <div class="editor-foot">
                    <button class="split-h" aria-label="Split"><svg class="icon"><use href="#i-split-h"/></svg></button>
                    <div class="scroll-h idle">
                        <svg class="icon"><use href="#i-left"/></svg>
                        <div class="track"></div>
                        <svg class="icon"><use href="#i-right"/></svg>
                    </div>
                    <svg class="icon collapse-mark"><use href="#i-chev-d"/></svg>
                </div>

                <div class="panel-tools grid-tools">
                    <button class="tool blue" aria-label="Refresh"><svg class="icon"><use href="#i-refresh"/></svg></button>
                    <button class="tool" aria-label="Stop" disabled><svg class="icon"><use href="#i-x"/></svg></button>
                    <span class="sep"></span>
                    <button class="tool" aria-label="Edit" disabled><svg class="icon"><use href="#i-edit-cell"/></svg></button>
                    <button class="tool" aria-label="Apply" disabled><svg class="icon"><use href="#i-check"/></svg></button>
                    <button class="tool" aria-label="Cancel" disabled><svg class="icon"><use href="#i-x"/></svg></button>
                    <span class="sep"></span>
                    <button class="tool active" aria-label="Fit columns"><svg class="icon"><use href="#i-grid-w"/></svg></button>
                    <button class="tool" aria-label="First page" disabled><svg class="icon"><use href="#i-first"/></svg></button>
                    <button class="tool" aria-label="Previous page" disabled><svg class="icon"><use href="#i-prev"/></svg></button>
                    <div class="combo combo-page">
                        <select aria-label="Page size"><option>1000</option></select>
                        <svg class="icon"><use href="#i-caret"/></svg>
                    </div>
                    <button class="tool" aria-label="Next page" disabled><svg class="icon"><use href="#i-next"/></svg></button>
                    <button class="tool" aria-label="Last page" disabled><svg class="icon"><use href="#i-last"/></svg></button>
                    <span class="sep"></span>
                    <button class="tool active" aria-label="Grid view"><svg class="icon"><use href="#i-grid"/></svg></button>
                    <button class="tool" aria-label="Card view"><svg class="icon"><use href="#i-cards"/></svg></button>
                    <span class="sep"></span>
                    <button class="tool" aria-label="Columns"><svg class="icon"><use href="#i-columns"/></svg></button>
                    <button class="tool" aria-label="Find"><svg class="icon"><use href="#i-find"/></svg></button>
                    <button class="tool" aria-label="Export"><svg class="icon"><use href="#i-grid-send"/></svg></button>
                    <button class="arrow dim end" aria-label="Toolbar options"><svg class="icon"><use href="#i-caret"/></svg></button>
                </div>

                <div class="results">
                    <table>
                        <colgroup><col class="col-mark"><col class="col-id"><col class="col-name"><col class="col-cat"><col></colgroup>
                        <thead>
                            <tr>
                                <th></th>
                                <th>ID<small>int</small></th>
                                <th>ProductName<small>varchar(50)</small></th>
                                <th>Category<small>varchar(50)</small></th>
                                <th></th>
                            </tr>
                        </thead>
                        <tbody id="resultRows"></tbody>
                    </table>
                    <div class="scroll-v results-scroll">
                        <svg class="icon"><use href="#i-up"/></svg>
                        <div class="track"><div class="thumb results-thumb"></div></div>
                        <svg class="icon"><use href="#i-down"/></svg>
                    </div>
                </div>
                <div class="record-nav">
                    <div class="record-buttons">
                        <button aria-label="First record" class="dim"><svg class="icon"><use href="#i-rec-first"/></svg></button>
                        <button aria-label="Previous record" class="dim"><svg class="icon small"><use href="#i-prev"/></svg></button>
                        <span class="record">Record 1 of 30</span>
                        <button aria-label="Next record"><svg class="icon small"><use href="#i-next"/></svg></button>
                        <button aria-label="Last record"><svg class="icon"><use href="#i-rec-last"/></svg></button>
                        <button aria-label="Add record" class="soft"><svg class="icon mid"><use href="#i-plus"/></svg></button>
                        <button aria-label="Delete record" class="soft"><svg class="icon mid"><use href="#i-minus"/></svg></button>
                        <button aria-label="Post" class="soft"><svg class="icon mid"><use href="#i-check-thin"/></svg></button>
                        <button aria-label="Cancel" class="soft"><svg class="icon mid"><use href="#i-close"/></svg></button>
                    </div>
                    <div class="scroll-h idle">
                        <svg class="icon"><use href="#i-left"/></svg>
                        <div class="track"></div>
                        <svg class="icon"><use href="#i-right"/></svg>
                    </div>
                </div>

                <div class="result-tabs">
                    <button class="result-tab current"><svg class="icon"><use href="#i-script"/></svg>Text</button>
                    <span class="sep"></span>
                    <button class="tool" aria-label="Swap panes"><svg class="icon"><use href="#i-swap"/></svg></button>
                    <button class="result-tab"><svg class="icon"><use href="#i-data"/></svg>Data</button>
                    <span class="sep"></span>
                    <button class="tool" aria-label="Add"><svg class="icon"><use href="#i-plus"/></svg></button>
                    <div class="query-status">
                        <span class="cell"><span class="swatch"></span>Development</span>
                        <span class="cell"><svg class="icon"><use href="#i-ok"/></svg>Query executed successfully.</span>
                        <span class="cell">00:00:00.260</span>
                        <span class="cell">demo\SQLEXPRESS02 (16)</span>
                        <span class="cell">sa</span>
                        <button class="arrow dim" aria-label="Toolbar options"><svg class="icon"><use href="#i-caret"/></svg></button>
                    </div>
                </div>
            </section>
        </main>

        <div class="dock">
            <button><svg class="icon"><use href="#i-output"/></svg>Output</button>
            <button><svg class="icon"><use href="#i-errors"/></svg>Error List</button>
        </div>
        <footer class="statusbar">
            <span class="ready">Ready</span>
            <span>Ln 11</span>
            <span>Col 23</span>
            <span>Ch 23</span>
            <svg class="icon size-grip"><use href="#i-grip"/></svg>
        </footer>
    </div>

    <script>
        const tables = [
            'dbo.AWBuildVersion', 'dbo.DatabaseLog', 'dbo.ErrorLog', 'dbo.Persons', 'dbo.test',
            'HumanResources.Candidates', 'HumanResources.Department', 'HumanResources.Employee',
            'HumanResources.EmployeeDepartmentHistory', 'HumanResources.EmployeePayHistory',
            'HumanResources.JobCandidate', 'HumanResources.NewEmployee (System-Versioned)',
            'HumanResources.Shift', 'Person.Address', 'Person.AddressType', 'Person.BusinessEntity',
            'Person.BusinessEntityAddress', 'Person.BusinessEntityContact', 'Person.ContactType',
            'Person.CountryRegion', 'Person.EmailAddress', 'Person.Password', 'Person.Person',
            'Person.Person_copy', 'Person.PersonPhone', 'Person.PhoneNumberType', 'Person.StateProvince',
            'Production.BillOfMaterials', 'Production.Culture', 'Production.Document', 'Production.Illustration'
        ];

        const nodes = [
            { level: 0, icon: 'plug', name: 'Development', open: true, swatch: true, cls: 'green' },
            { level: 1, icon: 'folder', name: 'System Databases' },
            { level: 1, icon: 'db', name: 'AdventureWorks2022', open: true, swatch: true, cls: 'selected' },
            { level: 2, icon: 'folder-open', name: 'Tables (89)', open: true },
            { level: 3, icon: 'folder', name: 'System Tables' }
        ];
        tables.forEach(name => {
            nodes.push({ level: 3, icon: name.includes('System-') ? 'table-sys' : 'table', name });
        });

        document.getElementById('tree').innerHTML = nodes.map(n => `
            <li class="${n.cls || ''}" style="padding-left: ${n.level * 19}px">
                <svg class="icon expander"><use href="#i-chev-${n.open ? 'd' : 'r'}"/></svg>
                <svg class="icon node-icon"><use href="#i-${n.icon}"/></svg>
                ${n.swatch ? '<span class="swatch"></span>' : ''}
                <span class="node-name">${n.name}</span>
            </li>`).join('');

        const rows = [
            [7, 'Cabtelliner', 'Audible'], [8, 'Antaridge', 'Movies'], [9, 'Tecordphone', 'Automotive'],
            [10, 'Monoceivlet', 'Games'], [10, 'Tabpickridge', 'Garden'], [11, 'Monleopscope', 'Automotive'],
            [11, 'Tablifiator', 'Tools'], [12, 'Armholdewon', 'Accessories'], [12, 'Moncessoner', 'Baby'],
            [13, 'Conholdletlet', 'Accessories'], [13, 'Supholdentor', 'Electronics'],
            [14, 'Cleantinator', 'Gifts'], [14, 'Transteller', 'Books'], [15, 'Montecteder', 'Computers'],
            ['', '', '']
        ];

        document.getElementById('resultRows').innerHTML = rows.map(r =>
            `<tr><td></td><td>${r[0]}</td><td>${r[1]}</td><td>${r[2]}</td><td></td></tr>`).join('');
    </script>
</body>
</html>
```

FILE: styles.css
```
* {
    box-sizing: border-box;
}
body {
    margin: 0;
    font-family: "Open Sans", "Noto Sans", sans-serif;
    font-size: 12px;
    line-height: 16px;
    color: #424242;
    background-color: #eeeef2;
}
button {
    display: flex;
    align-items: center;
    justify-content: center;
    margin: 0;
    padding: 0;
    border: none;
    background: none;
    font: inherit;
    color: inherit;
    white-space: nowrap;
}
button:disabled {
    color: #9f9f9f;
}
.sprite {
    display: none;
}
.svg-text {
    font-size: 8px;
    font-weight: 600;
    fill: #424242;
}
.icon {
    width: 16px;
    height: 16px;
    flex: none;
}
.window {
    display: flex;
    flex-direction: column;
    height: 100vh;
    border: 1px solid #ccceda;
    overflow: hidden;
}
.swatch {
    flex: none;
    width: 9px;
    height: 9px;
    background-color: #33cc33;
}
.blue {
    color: #00539c;
}
.dim {
    color: #9f9f9f;
}
.end {
    margin-left: auto;
}

/* title bar */
.titlebar {
    display: flex;
    align-items: center;
    flex: none;
    height: 30px;
    background-color: #f5f5f5;
}
.logo {
    width: 20px;
    height: 22px;
    margin: 0 12px 0 9px;
}
.menu {
    display: flex;
    gap: 12px;
    flex: 1;
}
.menu a {
    color: inherit;
    text-decoration: none;
}
.user {
    gap: 3px;
}
.avatar {
    width: 15px;
    height: 15px;
    border-radius: 50%;
    background-color: #c01c2c;
    color: #fff;
    font-size: 8px;
    line-height: 15px;
}
.titlebar .arrow {
    width: 36px;
}
.window-buttons {
    display: flex;
    margin-right: -1px;
}
.window-buttons button {
    width: 42px;
    height: 30px;
}
.window-buttons button:first-child {
    width: 24px;
}
.window-buttons button:nth-child(2) {
    width: 60px;
}
.window-buttons button:last-child {
    width: 24px;
    margin-right: 9px;
}

/* toolbars */
.toolbar {
    display: flex;
    flex: none;
    height: 28px;
}
.group {
    display: flex;
    align-items: center;
    border-right: 1px solid #ccceda;
}
.group.no-edge {
    border-right: none;
}
.grow {
    flex: 1;
}
.grip {
    width: 2px;
    height: 10px;
    margin: 0 6px 0 8px;
    background: repeating-linear-gradient(#a0a0a6 0 2px, transparent 2px 4px);
}
.tool {
    flex: none;
    width: 32px;
    height: 28px;
}
.arrow {
    flex: none;
    width: 22px;
    height: 28px;
}
.arrow.end {
    width: 18px;
}
.group-last .arrow {
    width: 19px;
}
.active {
    background-color: #d4d4d7;
}
.sep {
    flex: none;
    width: 1px;
    height: 24px;
    margin: 0 2px;
    background-color: #ccceda;
}
.text-tool {
    gap: 3px;
    height: 28px;
    padding: 0 6px 0 8px;
}
.tool-label {
    padding: 0 3px 0 7px;
}
.combo {
    display: flex;
    align-items: center;
    height: 18px;
    padding: 0 0 0 4px;
    border: 1px solid #ccceda;
    background-color: #fff;
    color: #424242;
}
.combo select {
    flex: 1;
    min-width: 0;
    padding: 0;
    border: none;
    appearance: none;
    background: none;
    color: #1e1e1e;
    font-family: "DejaVu Sans Condensed", "DejaVu Sans", sans-serif;
    font-size: 11px;
}
.combo .swatch + select {
    margin-left: 9px;
}
.combo-wide {
    width: 200px;
}
.combo-db {
    width: 149px;
    margin-right: 3px;
}
.combo-page {
    width: 64px;
    height: 20px;
    margin: 0 7px;
    padding-left: 6px;
}
.tool-after {
    margin-left: 7px;
}

/* explorer */
.workspace {
    display: flex;
    flex: 1;
    gap: 4px;
    min-height: 0;
    padding: 2px 3px 0;
}
.explorer {
    display: flex;
    flex-direction: column;
    flex: none;
    width: 353px;
    border: 1px solid #ccceda;
    background-color: #f5f5f5;
}
.panel-title {
    display: flex;
    align-items: center;
    flex: none;
    height: 27px;
    padding-left: 7px;
    border-bottom: 1px solid #ccceda;
}
.panel-title h2 {
    flex: 1;
    margin: 0;
    font-family: "DejaVu Sans Condensed", "DejaVu Sans", sans-serif;
    font-size: 11px;
}
.panel-title .tool {
    height: 26px;
    color: #6a6a6a;
}
.panel-tools {
    display: flex;
    align-items: center;
    flex: none;
    height: 28px;
    background-color: #eeeef2;
}
.tree-area {
    display: flex;
    flex: 1;
    min-height: 0;
    background-color: #fff;
}
.tree {
    flex: 1;
    min-width: 0;
    margin: 0;
    padding: 0;
    overflow: hidden;
    list-style: none;
    font-family: "DejaVu Sans Condensed", "DejaVu Sans", sans-serif;
    font-size: 11px;
    color: #1e1e1e;
}
.tree li {
    display: flex;
    height: 17px;
    white-space: nowrap;
}
.expander {
    margin-right: 1px;
    color: #007acc;
}
.node-icon {
    margin: 0 2px 0 1px;
}
.tree .swatch {
    margin: 4px 6px 0 2px;
}
.node-name {
    flex: 1;
    padding: 2px 0 0 4px;
    line-height: 15px;
}
.green .node-icon {
    color: #388a34;
}
.selected .node-name {
    background-color: #eeeef2;
}

/* scroll bars */
.scroll-v {
    display: flex;
    flex-direction: column;
    align-items: center;
    flex: none;
    width: 17px;
    background-color: #f5f5f5;
    color: #6e6e76;
}
.scroll-v .icon,
.scroll-h .icon {
    width: 17px;
    height: 17px;
}
.scroll-v .track {
    flex: 1;
    width: 100%;
}
.scroll-h {
    display: flex;
    flex: 1;
    height: 17px;
    background-color: #f5f5f5;
    color: #6e6e76;
}
.scroll-h .track {
    flex: 1;
}
.idle {
    color: #c4c4c8;
}
.thumb {
    background-color: #dedee3;
}
.tree-thumb {
    height: 30%;
}
.tree-scroll-h {
    flex: none;
    padding-right: 17px;
}
.tree-scroll-h .thumb {
    width: 91%;
    height: 100%;
}
.editor-thumb {
    height: 58%;
}

/* document */
.document {
    display: flex;
    flex-direction: column;
    flex: 1;
    min-width: 0;
}
.tabs {
    display: flex;
    flex: none;
    height: 29px;
    border-bottom: 1px solid #ccceda;
}
.tab {
    gap: 3px;
    width: 121px;
    justify-content: flex-start;
    padding-left: 8px;
    border: 1px solid #ccceda;
    border-width: 1px 0 0 1px;
    background-color: #f5f5f5;
    font-family: "DejaVu Sans Condensed", "DejaVu Sans", sans-serif;
    font-size: 11px;
    font-weight: bold;
}
.tab.current {
    gap: 4px;
    width: 124px;
    border-color: #007acc;
    background-color: #007acc;
    color: #fff;
}
.tab .swatch {
    width: 11px;
    height: 11px;
    border: 1px solid #fff;
}
.tab-x {
    margin: 0 6px 0 auto;
}
.tabs .arrow {
    width: 34px;
}
.editor {
    display: flex;
    flex: none;
    height: 210px;
    border: 1px solid #ccceda;
    border-width: 0 1px;
    background-color: #fff;
}
.gutter {
    width: 20px;
    background-color: #f5f5f5;
}
.changed {
    width: 4px;
    height: 164px;
    background-color: #ffff00;
}
.folds {
    width: 12px;
}
.fold {
    position: relative;
    width: 9px;
    height: 74px;
    background: linear-gradient(#c8c8d8, #c8c8d8) 4px 0 / 1px 100% no-repeat;
}
.fold::before {
    content: "";
    position: absolute;
    top: 2px;
    left: 0;
    width: 9px;
    height: 9px;
    border: 1px solid #c8c8d8;
    background: linear-gradient(#c8c8d8, #c8c8d8) center / 5px 1px no-repeat #fff;
}
.fold-first {
    height: 90px;
}
.fold-second {
    border-bottom: 1px solid #c8c8d8;
    clip-path: none;
}
.code {
    flex: 1;
    min-width: 0;
    overflow: hidden;
    font-family: "DejaVu Sans Mono", monospace;
    font-size: 12px;
    line-height: 15px;
    color: #000;
}
.code b {
    font-weight: normal;
    color: #0000ff;
}
.code i {
    font-style: normal;
    color: #808080;
}
.statement {
    border: 1px solid #ccceda;
    border-width: 0 1px;
}
.line {
    height: 15px;
}
.indent-1 {
    padding-left: 1ch;
}
.indent-2 {
    padding-left: 2ch;
}
.line-current {
    display: flex;
    height: 15px;
    border-top: 1px solid #ccceda;
    background-color: #e6e6ff;
    line-height: 13px;
}
.frame {
    border: 1px solid #ccceda;
    border-width: 0 1px 1px;
}
.caret {
    border-right: 2px solid #000;
}
.split-v {
    width: 17px;
    height: 16px;
    flex: none;
    border: 1px solid #ccceda;
    border-width: 0 0 1px 1px;
}
.editor-foot {
    position: relative;
    display: flex;
    flex: none;
    height: 26px;
    border: 1px solid #ccceda;
    border-width: 0 1px;
    background-color: #f5f5f5;
}
.split-h {
    width: 20px;
    height: 17px;
    border: 1px solid #ccceda;
    border-width: 1px 1px 0 0;
}
.editor-foot .scroll-h {
    margin-right: 17px;
}
.collapse-mark {
    position: absolute;
    bottom: -3px;
    left: 50%;
    margin-left: -7px;
    color: #6e6e76;
}
.grid-tools {
    height: 30px;
    border: 1px solid #ccceda;
}

/* results */
.results {
    position: relative;
    flex: 1;
    min-height: 0;
    overflow: hidden;
    border: 1px solid #ccceda;
    border-width: 0 1px;
    background-color: #fff;
    font-family: "DejaVu Sans Condensed", "DejaVu Sans", sans-serif;
    font-size: 11px;
}
.results table {
    width: 100%;
    table-layout: fixed;
    border-collapse: separate;
    border-spacing: 0;
    color: #1e1e1e;
}
.col-mark {
    width: 25px;
}
.col-id {
    width: 46px;
}
.col-name {
    width: 98px;
}
.col-cat {
    width: 88px;
}
.results th {
    height: 37px;
    padding: 3px 5px 0;
    border: 1px solid #ccceda;
    border-width: 0 1px 1px 0;
    background-color: #f5f5f5;
    color: #424242;
    font-weight: normal;
    line-height: 13px;
    text-align: left;
}
.results th:last-child {
    border-right: none;
}
.results small {
    display: block;
    font-size: 10px;
    line-height: 12px;
    color: #9f9f9f;
}
.results td {
    height: 21px;
    padding: 2px 5px 0;
    border: 1px solid #ccceda;
    border-width: 0 1px 1px 0;
    line-height: 18px;
}
.results td:first-child {
    border-bottom: none;
}
.results td:nth-child(2) {
    text-align: right;
}
.results td:last-child {
    border: none;
}
.results-scroll {
    position: absolute;
    top: 37px;
    right: 0;
    bottom: 0;
}
.results-thumb {
    height: 45%;
    margin-top: 50px;
}
.record-nav {
    display: flex;
    flex: none;
    height: 17px;
    padding-right: 17px;
    border: 1px solid #ccceda;
    border-width: 0 1px;
    background-color: #f5f5f5;
}
.record-buttons {
    display: flex;
    align-items: center;
    background-color: #fff;
    font-family: "Liberation Sans", Arial, sans-serif;
}
.record-buttons button {
    width: 16px;
    color: #5a5a5a;
}
.record-buttons .dim {
    color: #9f9f9f;
}
.record-buttons .soft {
    color: #787878;
}
.record {
    padding: 0 1px 0 9px;
    color: #1e1e1e;
}
.small {
    width: 9px;
    height: 9px;
}
.mid {
    width: 12px;
    height: 12px;
}
.result-tabs {
    display: flex;
    align-items: center;
    flex: none;
    height: 29px;
    border: 1px solid #ccceda;
    border-width: 0 1px 1px;
}
.result-tab {
    gap: 4px;
    height: 28px;
    padding: 0 8px 0 7px;
}
.result-tab.current {
    padding: 0 7px 0 8px;
    background-color: #d4d4d7;
    font-weight: bold;
}
.query-status {
    display: flex;
    align-items: center;
    margin-left: auto;
}
.cell {
    display: flex;
    align-items: center;
    gap: 5px;
    height: 24px;
    padding: 0 7px;
    border-left: 1px solid #ccceda;
}
.cell .swatch {
    margin: 0 2px 0 7px;
}

/* bottom bars */
.dock {
    display: flex;
    align-items: center;
    gap: 30px;
    flex: none;
    height: 30px;
    padding: 8px 16px 0;
    font-family: "DejaVu Sans Condensed", "DejaVu Sans", sans-serif;
    font-size: 11px;
}
.dock button {
    gap: 1px;
}
.statusbar {
    display: flex;
    align-items: center;
    gap: 12px;
    flex: none;
    height: 28px;
    padding: 0 0 0 15px;
    background-color: #f5f5f5;
}
.ready {
    flex: 1;
}
.size-grip {
    align-self: flex-end;
    margin-left: 60px;
}
```
